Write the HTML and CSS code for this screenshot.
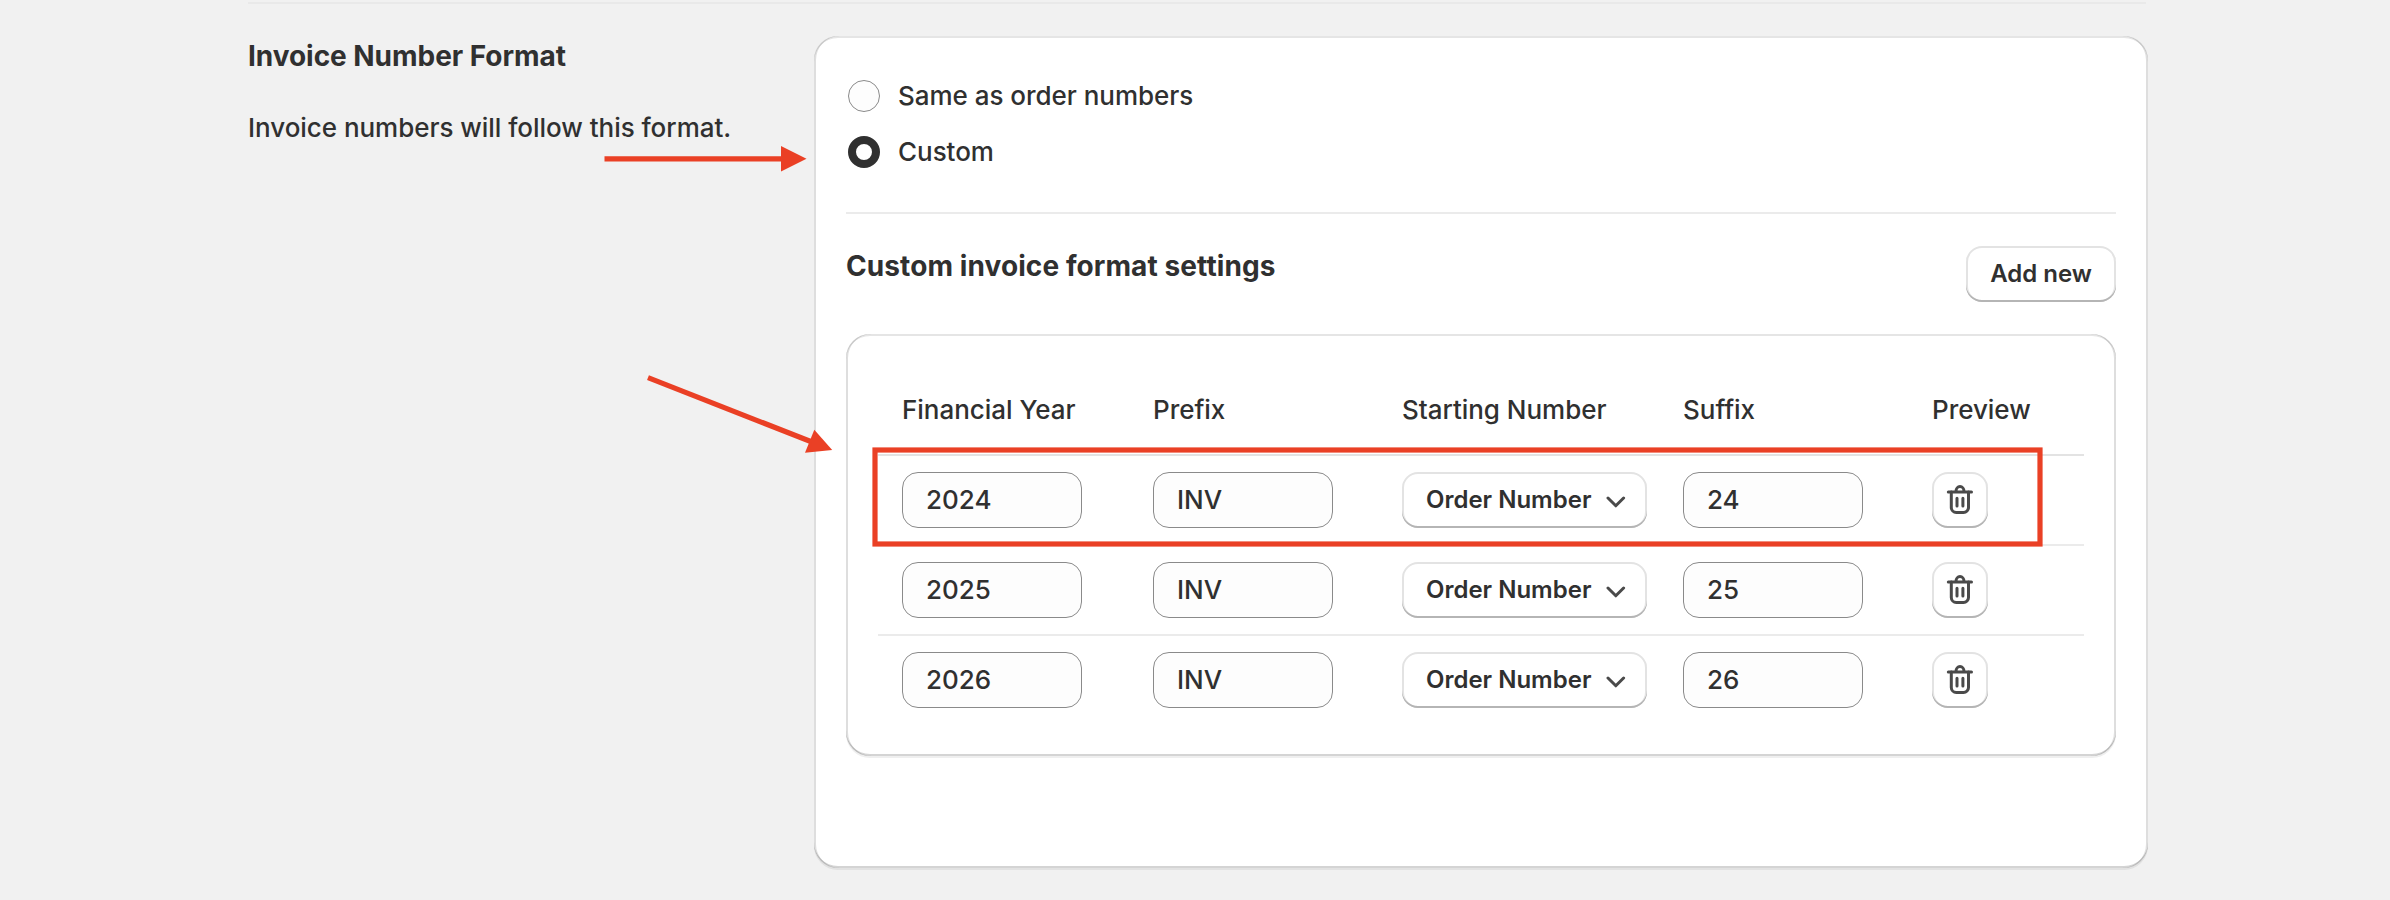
FILE: index.html
```html
<!DOCTYPE html>
<html lang="en">
<head>
<meta charset="utf-8">
<title>Invoice Number Format</title>
<link rel="stylesheet" href="styles.css">
</head>
<body>
<svg width="0" height="0" class="defs">
  <symbol id="trash" viewBox="0 0 40 40">
    <g fill="none" stroke="#4a4a4a" stroke-width="3" stroke-linecap="round" stroke-linejoin="round">
      <path d="M8.300 11.900H31.500"/>
      <path d="M16 11.400a4 4.800 0 0 1 8 0"/>
      <path d="M11.300 12V27.500a5 5 0 0 0 5 5H23.500a5 5 0 0 0 5-5V12"/>
      <path d="M17 18.300V26M22.900 18.300V26"/>
    </g>
  </symbol>
  <symbol id="chevron" viewBox="0 0 20 12">
    <path fill="none" stroke="#4a4a4a" stroke-width="3" stroke-linecap="round" stroke-linejoin="round" d="M2 2l7.800 7.800L17.600 2"/>
  </symbol>
</svg>
<main class="section">
  <div class="intro">
    <h2 class="heading">Invoice Number Format</h2>
    <p class="description">Invoice numbers will follow this format.</p>
  </div>
  <section class="card">
    <div class="choices">
      <div class="choice"><span class="radio"></span><span>Same as order numbers</span></div>
      <div class="choice"><span class="radio radio-on"></span><span>Custom</span></div>
    </div>
    <div class="toolbar">
      <h2 class="heading heading-settings">Custom invoice format settings</h2>
      <button class="button">Add new</button>
    </div>
    <div class="panel">
      <div class="row row-head">
        <span>Financial Year</span><span>Prefix</span><span>Starting Number</span><span>Suffix</span><span>Preview</span>
      </div>
      <div class="row row-first">
        <span class="field">2024</span><span class="field">INV</span>
        <button class="button select">Order Number<svg class="chevron"><use href="#chevron"/></svg></button>
        <span class="field">24</span>
        <button class="button icon-button"><svg class="trash"><use href="#trash"/></svg></button>
      </div>
      <div class="row">
        <span class="field">2025</span><span class="field">INV</span>
        <button class="button select">Order Number<svg class="chevron"><use href="#chevron"/></svg></button>
        <span class="field">25</span>
        <button class="button icon-button"><svg class="trash"><use href="#trash"/></svg></button>
      </div>
      <div class="row">
        <span class="field">2026</span><span class="field">INV</span>
        <button class="button select">Order Number<svg class="chevron"><use href="#chevron"/></svg></button>
        <span class="field">26</span>
        <button class="button icon-button"><svg class="trash"><use href="#trash"/></svg></button>
      </div>
    </div>
  </section>
</main>
<svg class="annotations" viewBox="0 0 2390 900">
  <g fill="#ea4025" stroke="none">
    <path d="M604.500 156.200H781V146L806.500 158.800 781 171.500V161.600H604.500Z"/>
    <path d="M832.200 450L805 452.800 814.300 429.700Z"/>
  </g>
  <path d="M648 377.700L812 442" fill="none" stroke="#ea4025" stroke-width="5.200"/>
  <rect x="875" y="450" width="1165" height="94" fill="none" stroke="#ea4025" stroke-width="5.200"/>
</svg>
</body>
</html>
```

FILE: styles.css
```css
* { box-sizing: border-box; }
body {
  margin: 0;
  height: 900px;
  overflow: hidden;
  background: #f1f1f1;
  color: #303030;
  font: 450 26px/40px Inter, sans-serif;
}
.defs { position: absolute; }
.section {
  width: 1900px;
  margin-left: 248px;
  padding-top: 36px;
  display: grid;
  grid-template-columns: 566px 1334px;
  background: linear-gradient(#e9e9e9, #e9e9e9) 0 2px / 1898px 2px no-repeat;
}
.heading { margin: 0; font-size: 28px; line-height: 40px; font-weight: 650; letter-spacing: -.04px; }
.heading-settings { letter-spacing: .09px; }
.description { margin: 32px 0 0; letter-spacing: -.04px; }
.card, .panel {
  background: #fff;
  border-radius: 24px;
  box-shadow:
    0 2px 0 rgba(26, 26, 26, .07),
    inset 2px 0 0 rgba(0, 0, 0, .13),
    inset -2px 0 0 rgba(0, 0, 0, .13),
    inset 0 -2px 0 rgba(0, 0, 0, .17),
    inset 0 2px 0 rgba(204, 204, 204, .5);
}
.card { height: 832px; padding: 32px; }
.choices {
  height: 146px;
  padding: 8px 2px 0;
  border-bottom: 2px solid #ebebeb;
  display: flex;
  flex-direction: column;
  gap: 16px;
}
.choice { display: flex; align-items: center; gap: 18px; letter-spacing: -.03px; }
.radio {
  width: 32px;
  height: 32px;
  border: 1px solid #8a8a8a;
  border-radius: 50%;
  background: #fdfdfd;
}
.radio-on { border: 8px solid #303030; background: #fff; }
.toolbar {
  margin: 32px 0;
  height: 56px;
  display: flex;
  justify-content: space-between;
  align-items: flex-start;
}
.button {
  height: 56px;
  padding: 0 24px;
  border: 0;
  border-radius: 16px;
  background: #fff;
  color: #303030;
  font: 600 24px/32px Inter, sans-serif;
  white-space: nowrap;
  box-shadow:
    inset 0 -2px 0 #b5b5b5,
    inset 0 0 0 2px #e3e3e3;
}
.panel { height: 422px; padding: 32px; }
.row {
  height: 90px;
  padding: 0 24px;
  border-top: 2px solid #ebebeb;
  display: grid;
  grid-template-columns: 251px 249px 281px 249px 1fr;
  align-items: center;
}
.row-head { height: 88px; border-top: 0; letter-spacing: -.03px; }
.row-first { border-color: #e3e3e3; }
.field {
  width: 180px;
  height: 56px;
  padding: 7px 23px;
  border: 1px solid #8a8a8a;
  border-radius: 16px;
  background: #fdfdfd;
}
.select { width: 245px; display: flex; align-items: center; justify-content: space-between; padding-right: 21px; }
.chevron { width: 20px; height: 12px; margin-top: 3px; }
.icon-button { width: 56px; padding: 8px; }
.trash { display: block; width: 40px; height: 40px; }
.annotations { position: absolute; left: 0; top: 0; width: 2390px; height: 900px; }
```
